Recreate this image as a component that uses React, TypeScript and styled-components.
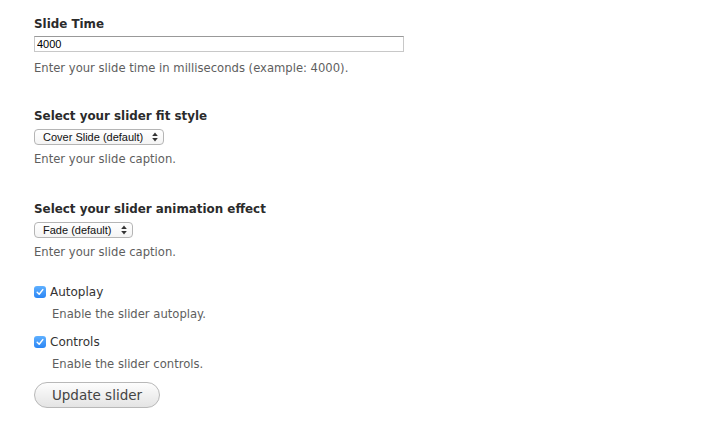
import React from "react";
import styled, { createGlobalStyle } from "styled-components";

const Global = createGlobalStyle`
  html, body { margin: 0; padding: 0; background: #ffffff; }
  body { font-family: "DejaVu Sans", Verdana, sans-serif; color: #333; }
`;

const Page = styled.form`
  padding: 15px 0 0 34px;
  display: flex;
  flex-direction: column;
  align-items: flex-start;
`;

const Field = styled.div<{ $gap?: number }>`
  display: flex;
  flex-direction: column;
  align-items: flex-start;
  margin-bottom: ${(p) => p.$gap ?? 0}px;
`;

const Label = styled.label`
  display: block;
  font-size: 11.9px;
  font-weight: bold;
  line-height: 18px;
  color: #2b2b2b;
  margin-bottom: 3px;
`;

const TextInput = styled.input`
  box-sizing: border-box;
  width: 370px;
  height: 16px;
  margin: 0;
  padding: 0 2px;
  border: 1px solid #c8c8c8;
  border-top-color: #999;
  border-radius: 0;
  font-family: "Liberation Sans", Arial, sans-serif;
  font-size: 11px;
  color: #000;
  outline: none;
`;

const Description = styled.div<{ $indent?: boolean; $top?: number }>`
  font-size: 11.6px;
  line-height: 18px;
  color: #5e5e5e;
  margin-top: ${(p) => p.$top ?? 7}px;
  padding-left: ${(p) => (p.$indent ? 18 : 0)}px;
`;

const SelectWrap = styled.span<{ $w: number }>`
  position: relative;
  display: block;
  width: ${(p) => p.$w}px;
  height: 16px;
  margin-top: 1px;
`;

const Select = styled.select`
  appearance: none;
  -webkit-appearance: none;
  display: block;
  box-sizing: border-box;
  width: 100%;
  height: 16px;
  margin: 0;
  padding: 0 0 0 8px;
  border: 1px solid #b5b5b5;
  border-radius: 4px;
  background: linear-gradient(#ffffff, #f4f4f4);
  font-family: "Liberation Sans", Arial, sans-serif;
  font-size: 11px;
  line-height: 14px;
  color: #111;
  outline: none;
`;

const Arrows = styled.svg`
  position: absolute;
  right: 6px;
  top: 3px;
  width: 6px;
  height: 10px;
  pointer-events: none;
`;

const CheckRow = styled.label`
  display: flex;
  align-items: center;
  gap: 4px;
  font-size: 12px;
  line-height: 18px;
  color: #333;
`;

const Box = styled.span`
  box-sizing: border-box;
  width: 12px;
  height: 12px;
  border-radius: 3px;
  background: linear-gradient(#5fb0ff, #2a85f4);
  display: inline-flex;
  align-items: center;
  justify-content: center;
`;

const Button = styled.button`
  box-sizing: border-box;
  width: 126px;
  height: 26px;
  margin-top: 9px;
  border: 1px solid #b8b8b8;
  border-radius: 13px;
  background: linear-gradient(#fdfdfd, #e4e4e4);
  font-family: "DejaVu Sans", Verdana, sans-serif;
  font-size: 13.5px;
  color: #444;
  padding: 0;
`;

const UpDown = () => (
  <Arrows viewBox="0 0 6 10">
    <path d="M3 0.5 L5.8 4 H0.2 Z" fill="#333" />
    <path d="M3 9.5 L5.8 6 H0.2 Z" fill="#333" />
  </Arrows>
);

const Check = () => (
  <Box>
    <svg width="8" height="8" viewBox="0 0 8 8">
      <path d="M1.2 4.3 L3.2 6.2 L6.8 1.6" fill="none" stroke="#fff" strokeWidth="1.5" strokeLinecap="round" strokeLinejoin="round" />
    </svg>
  </Box>
);

export default function App() {
  return (
    <>
      <Global />
      <Page onSubmit={(e) => e.preventDefault()}>
        <Field $gap={30}>
          <Label>Slide Time</Label>
          <TextInput defaultValue="4000" />
          <Description>Enter your slide time in milliseconds (example: 4000).</Description>
        </Field>
        <Field $gap={32}>
          <Label>Select your slider fit style</Label>
          <SelectWrap $w={130}>
            <Select defaultValue="cover">
              <option value="cover">Cover Slide (default)</option>
            </Select>
            <UpDown />
          </SelectWrap>
          <Description $top={5}>Enter your slide caption.</Description>
        </Field>
        <Field $gap={22}>
          <Label>Select your slider animation effect</Label>
          <SelectWrap $w={99}>
            <Select defaultValue="fade">
              <option value="fade">Fade (default)</option>
            </Select>
            <UpDown />
          </SelectWrap>
          <Description $top={5}>Enter your slide caption.</Description>
        </Field>
        <Field $gap={10}>
          <CheckRow>
            <Check />
            Autoplay
          </CheckRow>
          <Description $indent $top={4}>Enable the slider autoplay.</Description>
        </Field>
        <Field>
          <CheckRow>
            <Check />
            Controls
          </CheckRow>
          <Description $indent $top={4}>Enable the slider controls.</Description>
        </Field>
        <Button type="button">Update slider</Button>
      </Page>
    </>
  );
}
